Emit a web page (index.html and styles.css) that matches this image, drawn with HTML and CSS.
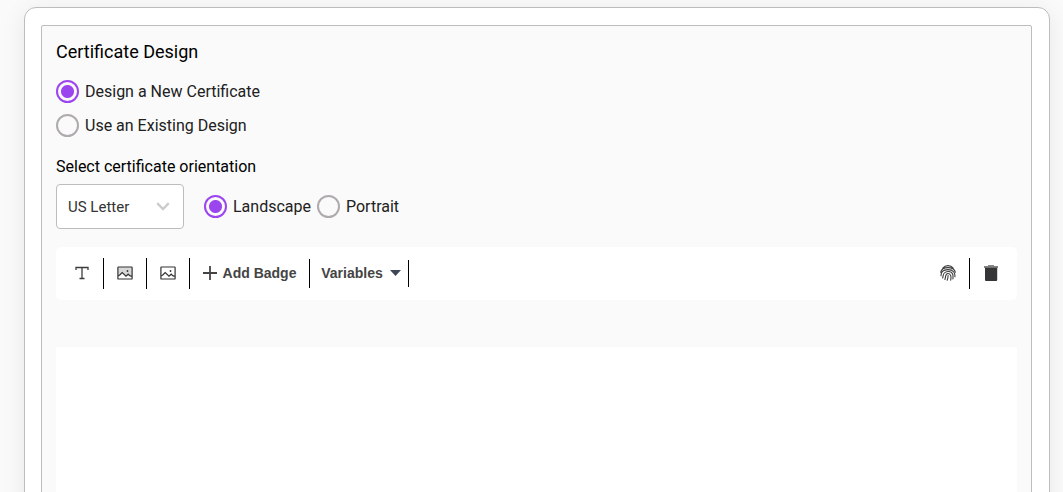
FILE: index.html
```html
<!DOCTYPE html>
<html lang="en">
<head>
<meta charset="utf-8">
<meta name="viewport" content="width=device-width, initial-scale=1">
<title>Certificate Design</title>
<link rel="stylesheet" href="styles.css">
</head>
<body>
<main class="card">
  <section class="panel">
    <h1 class="title">Certificate Design</h1>
    <div class="choices">
      <label class="choice"><input class="radio" type="radio" name="design" checked>Design a New Certificate</label>
      <label class="choice"><input class="radio" type="radio" name="design">Use an Existing Design</label>
    </div>
    <label class="subtitle" for="paper">Select certificate orientation</label>
    <div class="orientation">
      <div class="select-box">
        <select class="select" id="paper"><option>US Letter</option><option>A4</option></select>
        <svg class="chevron" viewBox="0 0 14 9" aria-hidden="true"><path d="M1.2 1.2 7 7l5.800-5.800" fill="none" stroke="#ccc" stroke-width="2.400"/></svg>
      </div>
      <div class="directions">
        <label class="choice"><input class="radio" type="radio" name="direction" checked>Landscape</label>
        <label class="choice"><input class="radio" type="radio" name="direction">Portrait</label>
      </div>
    </div>
    <div class="toolbar">
      <button class="tool" aria-label="Add text"><svg class="icon" viewBox="0 0 16 16"><path d="M2 5V2.500h12V5M8 2.500v11M5.500 13.500h5" fill="none" stroke="#3c3c3c" stroke-width="1.300"/></svg></button>
      <span class="rule"></span>
      <button class="tool" aria-label="Background image"><svg class="icon" viewBox="0 0 16 16"><rect x=".9" y="2" width="14.200" height="12" rx=".6" fill="#d8d8d8"/><path d="M1 11.500 5 7.500l3.500 3.700 2-2 4.500 2.800v2H1z" fill="#fff"/><rect x=".9" y="2" width="14.200" height="12" rx=".6" fill="none" stroke="#333" stroke-width="1.200"/><path d="M1.200 11 3 9.700 5.200 7.500 9 11.200l2.200-2 1.500 1.500 2.200.6" fill="none" stroke="#333" stroke-width="1.200"/><circle cx="10.500" cy="6" r=".9" fill="#333"/></svg></button>
      <span class="rule"></span>
      <button class="tool" aria-label="Add image"><svg class="icon" viewBox="0 0 16 16"><rect x=".9" y="2" width="14.200" height="12" rx=".6" fill="none" stroke="#333" stroke-width="1.200"/><path d="M1.200 11 3 9.700 5.200 7.500 9 11.200l2.200-2 1.500 1.500 2.200.6" fill="none" stroke="#333" stroke-width="1.200"/><circle cx="10.500" cy="6" r=".9" fill="#333"/></svg></button>
      <span class="rule"></span>
      <button class="tool tool-badge"><svg class="icon icon-plus" viewBox="0 0 14 14"><path d="M7 0v14M0 7h14" fill="none" stroke="#444" stroke-width="1.800"/></svg>Add Badge</button>
      <span class="rule rule-medium"></span>
      <button class="tool tool-variables">Variables<svg class="caret" viewBox="0 0 11 6"><path d="M0 0h11L5.500 6z" fill="#3e4757"/></svg></button>
      <span class="rule rule-short"></span>
      <button class="tool tool-end" aria-label="Credential ID"><svg class="icon" viewBox="0 0 16 16" fill="none" stroke="#3c3c3c" stroke-width="1.100" stroke-linecap="round"><path d="M2.800 3C5.500-.2 10.500-.2 13.200 3M.6 7.300C2 1 14 1 15.400 7.300M1 10.800C1 7.500 2.500 4.600 8 4.600s7.200 3.400 6.900 7.100M2.700 13c.8-2.500-.3-6.300 5.300-6.500s5.200 4.500 4.900 7.400M4.900 14.500C6.100 11.500 4.900 8.600 8 8.500s3.300 3.500 2.700 6.600M7.200 15.200c.7-1.600.9-2.800.9-4.700"/></svg></button>
      <span class="rule"></span>
      <button class="tool" aria-label="Delete"><svg class="icon" viewBox="0 0 16 16"><path d="M5 0h6v1.200H5z" fill="#888"/><path d="M1 1.200h14v1.600H1z" fill="#666"/><path d="M2 2.800h12.200V15q0 1-1 1H3q-1 0-1-1z" fill="#353538"/></svg></button>
    </div>
    <div class="canvas"></div>
  </section>
</main>
</body>
</html>
```
FILE: styles.css
```css
* { box-sizing: border-box; }
body {
  height: 100vh;
  margin: 0;
  padding: 7px 13px 0 24px;
  overflow: hidden;
  background: #fafafa;
  color: #000;
  font: 16px/20px Roboto, sans-serif;
}
.card {
  padding: 17px 17px 16px 16px;
  border: 1px solid #bdbdbd;
  border-radius: 12px;
  background: #fff;
  box-shadow: 0 4px 24px rgba(0, 0, 0, 0.08);
}
.panel {
  padding: 14px;
  border: 1px solid #bdbdbd;
  border-radius: 2px;
  background: #fafafa;
}
.title {
  margin: 0 0 16px;
  font-size: 18px;
  font-weight: 400;
  line-height: 24px;
}
.choices {
  display: flex;
  flex-direction: column;
  align-items: flex-start;
  gap: 11px;
  margin-bottom: 20px;
}
.choice {
  display: flex;
  align-items: center;
  gap: 6px;
  color: #212121;
}
.radio {
  appearance: none;
  width: 23px;
  height: 23px;
  margin: 0;
  border: 2px solid #aeaaae;
  border-radius: 50%;
}
.radio:checked {
  border-color: #9b45ee;
  background: radial-gradient(circle, #9b45ee 6px, transparent 7px);
}
.subtitle {
  display: block;
  margin-bottom: 7px;
}
.orientation {
  display: flex;
  align-items: center;
  gap: 20px;
  margin-bottom: 18px;
}
.directions {
  display: flex;
  gap: 6px;
}
.select-box {
  display: grid;
  align-items: center;
  width: 128px;
}
.select {
  grid-area: 1 / 1;
  appearance: none;
  height: 45px;
  padding: 0 11px;
  border: 1px solid #bdbdbd;
  border-radius: 4px;
  background: #fff;
  color: #333;
  font: 15px/20px Roboto, sans-serif;
}
.chevron {
  grid-area: 1 / 1;
  justify-self: end;
  width: 14px;
  height: 9px;
  margin-right: 14px;
  pointer-events: none;
}
.toolbar {
  display: flex;
  align-items: center;
  height: 53px;
  padding: 0 5px;
  border-radius: 5px;
  background: #fff;
}
.tool {
  display: flex;
  align-items: center;
  justify-content: center;
  width: 42px;
  height: 31px;
  padding: 0 0 1px;
  border: 0;
  background: none;
  color: #444;
  font: bold 14px/20px "Liberation Sans", Arial, sans-serif;
}
.tool-badge {
  gap: 6px;
  width: 119px;
}
.tool-variables {
  gap: 7px;
  width: 98px;
  padding-left: 4px;
}
.tool-end { margin-left: auto; }
.icon {
  width: 16px;
  height: 16px;
}
.icon-plus {
  width: 14px;
  height: 14px;
}
.caret {
  width: 11px;
  height: 6px;
}
.rule {
  width: 1px;
  height: 31px;
  background: #000;
}
.rule-medium { height: 29px; }
.rule-short { height: 27px; }
.canvas {
  height: 640px;
  margin-top: 47px;
  background: #fff;
}
```
